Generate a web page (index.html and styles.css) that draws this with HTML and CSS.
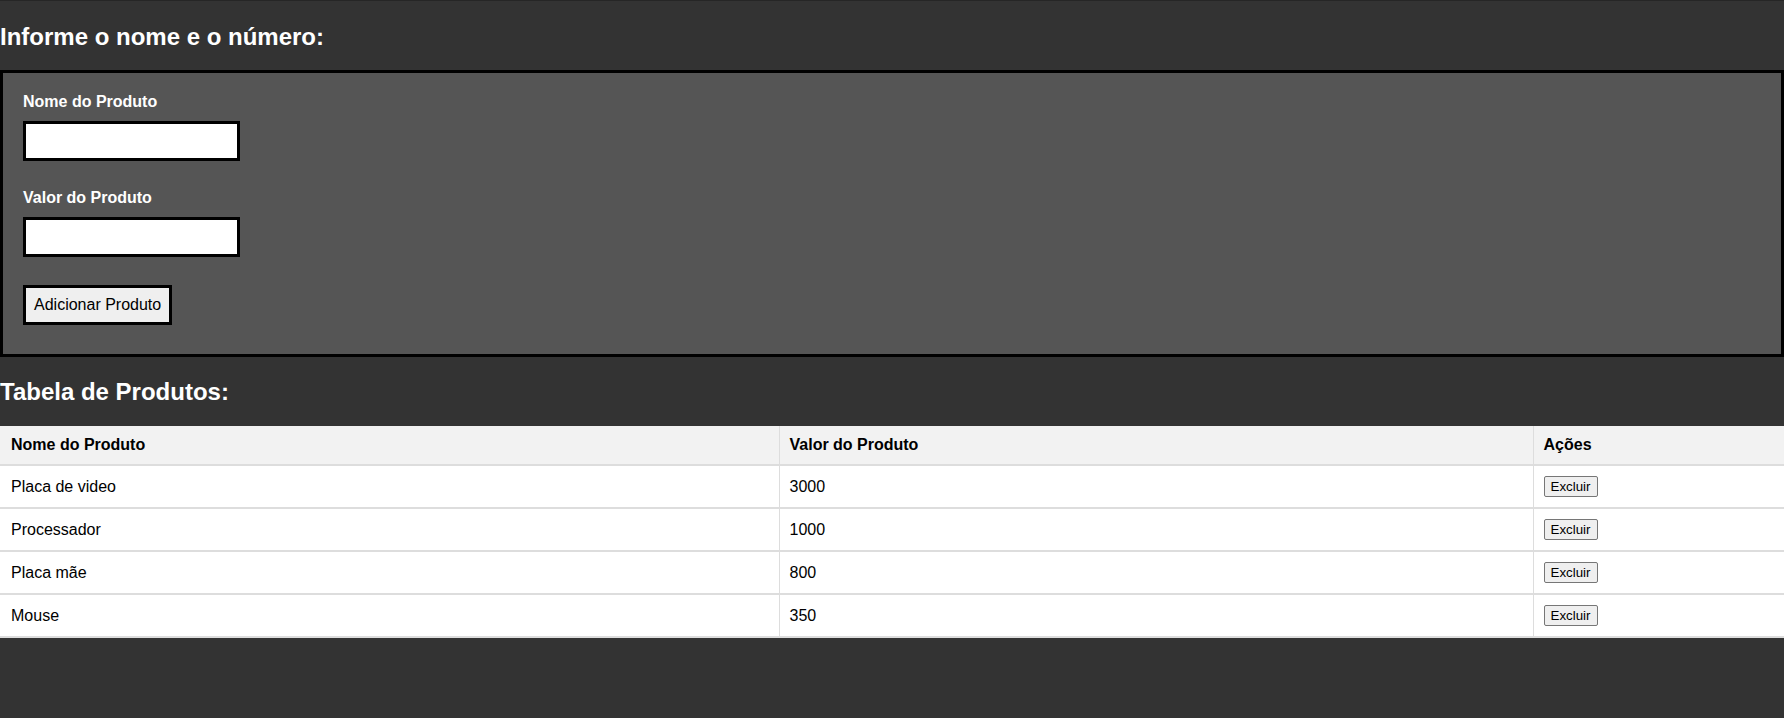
FILE: index.html
```html
<!DOCTYPE html>
<html lang="pt-BR">
<head>
<meta charset="UTF-8">
<title>Produtos</title>
<link rel="stylesheet" href="styles.css">
</head>
<body>
  <h2 class="title title-form">Informe o nome e o número:</h2>
  <form class="product-form">
    <div class="field">
      <label class="field-label" for="nome">Nome do Produto</label>
      <input class="field-input" id="nome" type="text">
    </div>
    <div class="field">
      <label class="field-label" for="valor">Valor do Produto</label>
      <input class="field-input" id="valor" type="text">
    </div>
    <button type="button" class="add-btn">Adicionar Produto</button>
  </form>
  <h2 class="title title-table">Tabela de Produtos:</h2>
  <table class="products">
    <colgroup>
      <col class="col-name">
      <col class="col-value">
      <col class="col-actions">
    </colgroup>
    <thead>
      <tr><th>Nome do Produto</th><th>Valor do Produto</th><th>Ações</th></tr>
    </thead>
    <tbody>
      <tr><td>Placa de video</td><td>3000</td><td><button type="button" class="del-btn">Excluir</button></td></tr>
      <tr><td>Processador</td><td>1000</td><td><button type="button" class="del-btn">Excluir</button></td></tr>
      <tr><td>Placa mãe</td><td>800</td><td><button type="button" class="del-btn">Excluir</button></td></tr>
      <tr><td>Mouse</td><td>350</td><td><button type="button" class="del-btn">Excluir</button></td></tr>
    </tbody>
  </table>
</body>
</html>
```
FILE: styles.css
```css
html, body {
  margin: 0;
  padding: 0;
  background: #333333;
}
body {
  border-top: 1px solid #262626;
  font-family: "Liberation Sans", Arial, sans-serif;
  font-size: 16px;
  min-height: 717px;
}
.title {
  color: #ffffff;
  font-size: 24px;
  font-weight: bold;
  line-height: 28px;
  margin: 0;
}
.title-form {
  margin: 22px 0 19px;
}
.title-table {
  margin: 21px 0 20px;
}
.product-form {
  background: #555555;
  border: 3px solid #000000;
  padding: 20px 20px 29px;
  display: flex;
  flex-direction: column;
  align-items: flex-start;
}
.field {
  display: flex;
  flex-direction: column;
  align-items: flex-start;
  margin-bottom: 28px;
}
.field-label {
  color: #ffffff;
  font-weight: bold;
  line-height: 18px;
  margin-bottom: 10px;
}
.field-input {
  box-sizing: border-box;
  width: 217px;
  height: 40px;
  border: 3px solid #000000;
  background: #ffffff;
  padding: 8px;
  font-family: "Liberation Sans", Arial, sans-serif;
  font-size: 16px;
  margin: 0;
  outline: none;
}
.add-btn {
  box-sizing: border-box;
  height: 40px;
  padding: 0 8px;
  margin: 0;
  border: 3px solid #000000;
  background: #efefef;
  color: #000000;
  font-family: "Liberation Sans", Arial, sans-serif;
  font-size: 16px;
  line-height: 18px;
}
.products {
  width: 100%;
  border-collapse: collapse;
  background: #ffffff;
  color: #000000;
}
.col-name { width: 779px; }
.col-value { width: 754px; }
.products th,
.products td {
  text-align: left;
  padding: 10px;
  line-height: 18px;
  border-bottom: 2px solid #dddddd;
  border-left: 1px solid #dddddd;
  vertical-align: middle;
}
.products th:first-child,
.products td:first-child {
  border-left: none;
  padding-left: 11px;
}
.products th {
  background: #f2f2f2;
  font-weight: bold;
}
.products td {
  height: 21px;
}
.del-btn {
  box-sizing: border-box;
  height: 21px;
  padding: 1px 6px;
  margin: 0;
  font-family: "Liberation Sans", Arial, sans-serif;
  font-size: 13.333px;
  line-height: 15px;
  color: #000000;
  background: #efefef;
  border: 1px solid #767676;
  border-radius: 2px;
  display: block;
}
```
